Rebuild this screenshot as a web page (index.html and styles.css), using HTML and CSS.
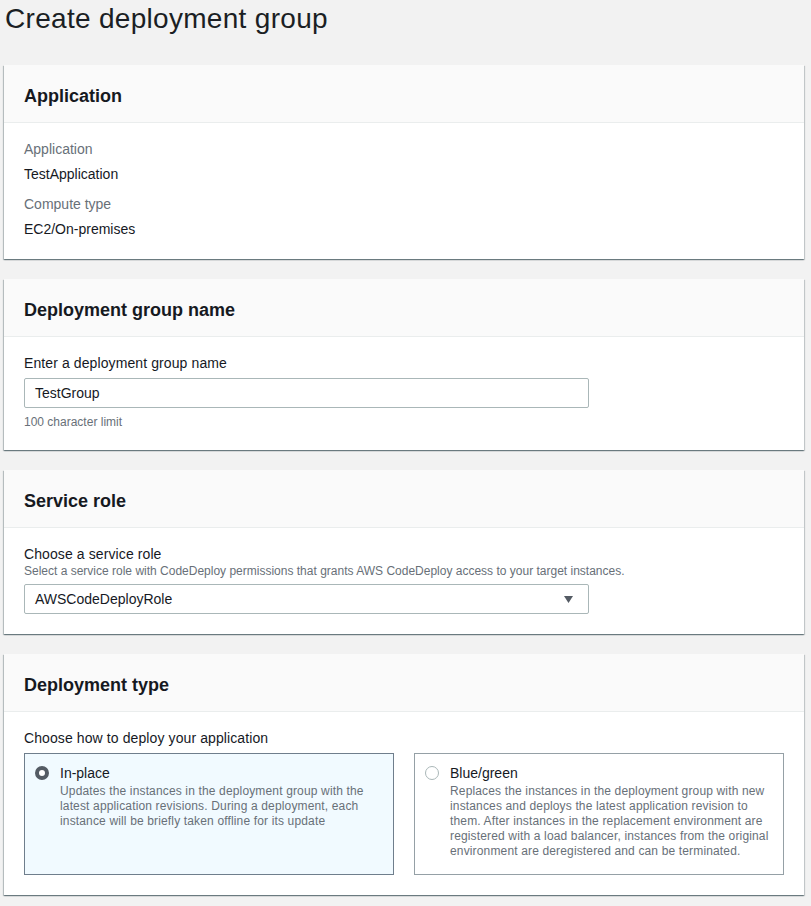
FILE: index.html
```html
<!DOCTYPE html>
<html>
<head>
<meta charset="utf-8">
<link rel="stylesheet" href="styles.css">
</head>
<body>
<div class="page">
  <h1 class="title">Create deployment group</h1>

  <section class="card">
    <div class="card-header"><h2>Application</h2></div>
    <div class="card-body">
      <div class="kv-label">Application</div>
      <div class="kv-value">TestApplication</div>
      <div class="kv-label kv-next">Compute type</div>
      <div class="kv-value">EC2/On-premises</div>
    </div>
  </section>

  <section class="card">
    <div class="card-header"><h2>Deployment group name</h2></div>
    <div class="card-body">
      <div class="field-label">Enter a deployment group name</div>
      <div class="input">TestGroup</div>
      <div class="hint">100 character limit</div>
    </div>
  </section>

  <section class="card">
    <div class="card-header"><h2>Service role</h2></div>
    <div class="card-body">
      <div class="field-label">Choose a service role</div>
      <div class="field-desc">Select a service role with CodeDeploy permissions that grants AWS CodeDeploy access to your target instances.</div>
      <div class="input select">
        <span>AWSCodeDeployRole</span>
        <svg class="caret" width="9" height="7" viewBox="0 0 9 7"><path d="M0 0 H9 L4.5 7 Z" fill="#545b64"/></svg>
      </div>
    </div>
  </section>

  <section class="card">
    <div class="card-header"><h2>Deployment type</h2></div>
    <div class="card-body">
      <div class="field-label">Choose how to deploy your application</div>
      <div class="tiles">
        <div class="tile tile-selected">
          <span class="radio radio-on"></span>
          <div class="tile-text">
            <div class="tile-title">In-place</div>
            <div class="tile-desc">Updates the instances in the deployment group with the latest application revisions. During a deployment, each instance will be briefly taken offline for its update</div>
          </div>
        </div>
        <div class="tile">
          <span class="radio"></span>
          <div class="tile-text">
            <div class="tile-title">Blue/green</div>
            <div class="tile-desc">Replaces the instances in the deployment group with new instances and deploys the latest application revision to them. After instances in the replacement environment are registered with a load balancer, instances from the original environment are deregistered and can be terminated.</div>
          </div>
        </div>
      </div>
    </div>
  </section>
</div>
</body>
</html>
```

FILE: styles.css
```css
html, body {
  margin: 0;
  padding: 0;
  background: #f2f2f2;
  font-family: "Liberation Sans", Arial, sans-serif;
  color: #16191f;
}

.page {
  width: 800px;
  padding: 1px 0 0 4px;
}

.title {
  margin: 0 0 28px 1px;
  font-size: 28px;
  line-height: 36px;
  font-weight: normal;
  letter-spacing: 0.3px;
  color: #1b1f24;
}

.card {
  background: #fff;
  margin-bottom: 20px;
  box-shadow: 0 1px 1px 0 rgba(0, 28, 36, 0.35), 1px 1px 1px 0 rgba(0, 28, 36, 0.15), -1px 1px 1px 0 rgba(0, 28, 36, 0.2);
}

.card-header {
  box-sizing: border-box;
  height: 58px;
  display: flex;
  align-items: center;
  padding: 5px 20px 0 20px;
  background: #fafafa;
  border-bottom: 1px solid #eaeded;
}

.card-header h2 {
  margin: 0;
  font-size: 18px;
  font-weight: bold;
  color: #16191f;
}

.card-body {
  padding: 16px 20px 20px 20px;
  font-size: 14px;
  line-height: 20px;
}

.kv-label {
  color: #687078;
}

.kv-value {
  margin-top: 5px;
  color: #16191f;
}

.kv-next {
  margin-top: 10px;
}

.field-label {
  color: #16191f;
  letter-spacing: 0.1px;
}

.field-desc {
  font-size: 12px;
  line-height: 14px;
  color: #687078;
}

.input {
  box-sizing: border-box;
  width: 565px;
  height: 30px;
  margin-top: 5px;
  border: 1px solid #aab7b8;
  border-radius: 2px;
  padding: 0 10px;
  display: flex;
  align-items: center;
  font-size: 14px;
  color: #16191f;
}

.select {
  margin-top: 6px;
  justify-content: space-between;
  padding-right: 15px;
}

.hint {
  margin-top: 6px;
  font-size: 12px;
  line-height: 16px;
  color: #687078;
}

.tiles {
  margin-top: 5px;
  display: grid;
  grid-template-columns: 370px 370px;
  column-gap: 20px;
}

.tile {
  box-sizing: border-box;
  height: 122px;
  border: 1px solid #95a0a6;
  padding: 10px 10px 0 10px;
  display: flex;
  align-items: flex-start;
}

.tile-selected {
  background: #f1faff;
  border-color: #6f7e8c;
}

.radio {
  box-sizing: border-box;
  flex: none;
  width: 14px;
  height: 14px;
  margin-top: 2px;
  border-radius: 50%;
  border: 1px solid #aab7b8;
  background: #fff;
}

.radio-on {
  border: 4px solid #545b64;
}

.tile-text {
  margin-left: 11px;
}

.tile-title {
  font-size: 14px;
  line-height: 18px;
  color: #16191f;
}

.tile-desc {
  margin-top: 2px;
  font-size: 12px;
  line-height: 15px;
  letter-spacing: 0.15px;
  color: #687078;
}
```
